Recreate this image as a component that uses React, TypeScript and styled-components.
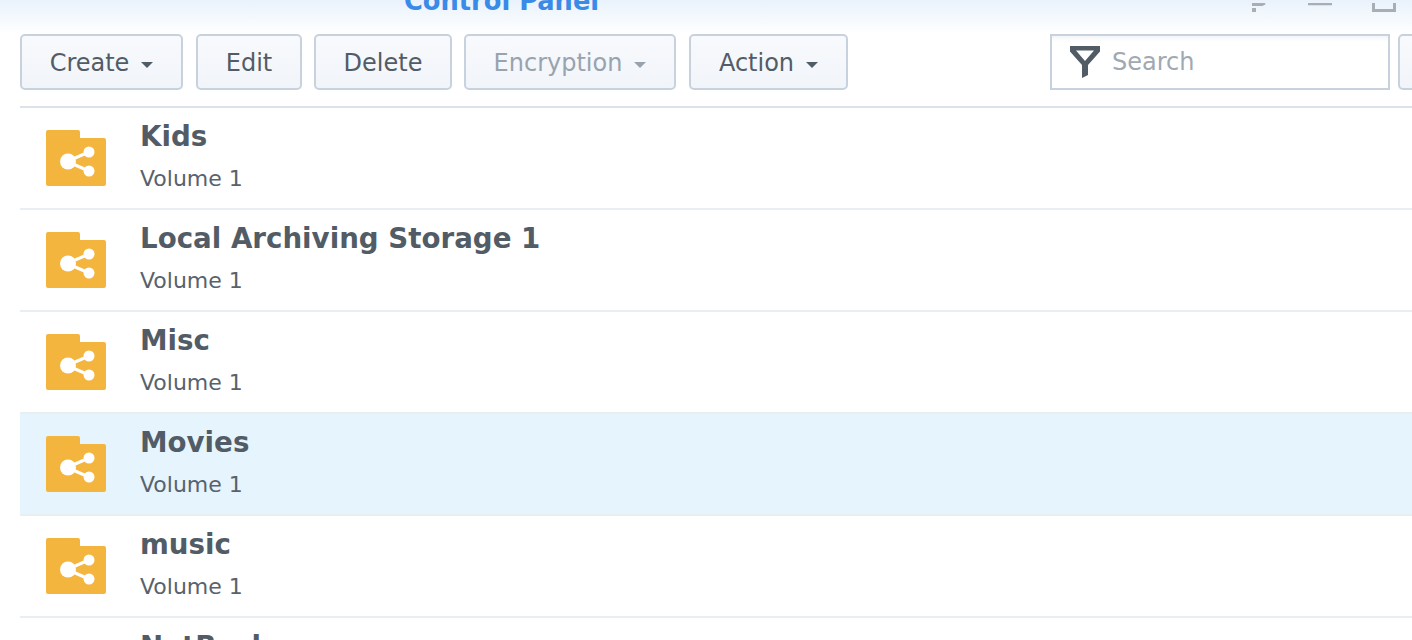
import React from "react";
import styled, { createGlobalStyle } from "styled-components";

const Global = createGlobalStyle`
  html, body { margin: 0; padding: 0; background: #fff; }
  body { font-family: "DejaVu Sans", Verdana, sans-serif; overflow: hidden; }
`;

const Page = styled.div`
  width: 1412px;
  height: 640px;
  overflow: hidden;
  background: #fff;
`;

const Header = styled.div`
  height: 34px;
  overflow: hidden;
  display: flex;
  align-items: flex-end;
  background: linear-gradient(180deg, #e9f2fb 0%, #ffffff 100%);
  position: relative;
`;

const Title = styled.div`
  margin-left: 404px;
  margin-bottom: 18px;
  font-size: 25.7px;
  line-height: 30px;
  font-weight: 700;
  color: #3a8ae8;
  white-space: nowrap;
`;

const WindowControls = styled.div`
  position: absolute;
  top: 0;
  right: 0;
  height: 12px;
`;

const Toolbar = styled.div`
  display: flex;
  align-items: flex-start;
  height: 72px;
  padding-left: 20px;
  box-sizing: border-box;
`;

const Button = styled.div<{ $w: number; $gap: number; $disabled?: boolean }>`
  width: ${(p) => p.$w}px;
  height: 56px;
  margin-right: ${(p) => p.$gap}px;
  box-sizing: border-box;
  border: 2px solid #c8d2de;
  border-radius: 5px;
  padding-top: 2px;
  background: linear-gradient(180deg, #f8fafd 0%, #f1f4f9 100%);
  color: ${(p) => (p.$disabled ? "#98a3ae" : "#525c66")};
  font-size: 24px;
  display: flex;
  align-items: center;
  justify-content: center;
  gap: 12px;
  flex-shrink: 0;
`;

const Caret = styled.span<{ $disabled?: boolean }>`
  width: 0;
  height: 0;
  margin-top: 3px;
  border-left: 6px solid transparent;
  border-right: 6px solid transparent;
  border-top: 6px solid ${(p) => (p.$disabled ? "#98a3ae" : "#525c66")};
`;

const Search = styled.div`
  width: 340px;
  height: 56px;
  margin-left: 202px;
  box-sizing: border-box;
  border: 2px solid #c8d2de;
  background: linear-gradient(180deg, #f3f5f8 0, #ffffff 6px);
  display: flex;
  align-items: center;
  padding-left: 18px;
  gap: 12px;
  color: #a0a9b2;
  font-size: 24px;
  flex-shrink: 0;
  line-height: 1;
`;

const SideButton = styled.div`
  width: 60px;
  height: 56px;
  margin-left: 8px;
  box-sizing: border-box;
  border: 2px solid #c8d2de;
  border-radius: 5px;
  background: linear-gradient(180deg, #f8fafd 0%, #f1f4f9 100%);
  flex-shrink: 0;
`;

const List = styled.div`
  margin-left: 20px;
  border-top: 2px solid #dbe2ea;
`;

const Row = styled.div<{ $selected?: boolean }>`
  height: 102px;
  box-sizing: border-box;
  border-bottom: 2px solid #e9eef2;
  background: ${(p) => (p.$selected ? "#e6f4fe" : "#fff")};
  display: flex;
  align-items: flex-start;
  padding-left: 26px;
`;

const FolderSvg = styled.svg`
  width: 60px;
  height: 56px;
  margin-top: 22px;
  flex-shrink: 0;
`;

const Texts = styled.div`
  margin-left: 35px;
`;

const Name = styled.div`
  font-size: 27.7px;
  line-height: 32px;
  margin-top: 13px;
  margin-left: -1px;
  font-weight: 700;
  color: #525c66;
  white-space: nowrap;
`;

const Sub = styled.div`
  font-size: 22px;
  line-height: 26px;
  margin-top: 13px;
  margin-left: -1px;
  color: #58626c;
  white-space: nowrap;
`;

const Folder = () => (
  <FolderSvg viewBox="0 0 60 56">
    <path
      d="M2 0h30a2 2 0 0 1 2 2v6h24a2 2 0 0 1 2 2v44a2 2 0 0 1-2 2H2a2 2 0 0 1-2-2V2a2 2 0 0 1 2-2z"
      fill="#f4b53f"
    />
    <path d="M21 31.5 L43 22 M21 31.5 L43 41" stroke="#fff" strokeWidth="3" />
    <circle cx="22" cy="31.5" r="8" fill="#fff" />
    <circle cx="43" cy="22" r="5.5" fill="#fff" />
    <circle cx="43" cy="41" r="5.5" fill="#fff" />
  </FolderSvg>
);

const Funnel = () => (
  <svg width="30" height="32" viewBox="0 0 30 32" style={{ flexShrink: 0 }}>
    <path
      fillRule="evenodd"
      d="M0 0h30v5.5L18 19v10l-6 3V19L0 5.5zM6 4.5L15 15L24 4.5z"
      fill="#525c66"
    />
  </svg>
);

const items: { name: string; selected?: boolean }[] = [
  { name: "Kids" },
  { name: "Local Archiving Storage 1" },
  { name: "Misc" },
  { name: "Movies", selected: true },
  { name: "music" },
  { name: "NetBackup" },
];

export default function App() {
  return (
    <Page>
      <Global />
      <Header>
        <Title>Control Panel</Title>
        <WindowControls>
          <svg width="172" height="12" viewBox="0 0 172 12">
            <path d="M12 1.5h10l3-1.5" stroke="#a8aeb4" strokeWidth="3" fill="none" />
            <path d="M12 7h4" stroke="#a8aeb4" strokeWidth="4" fill="none" />
            <path d="M68 1h24" stroke="#a8aeb4" strokeWidth="2.5" />
            <path d="M133.5 0v7.5h21V0" stroke="#a8aeb4" strokeWidth="3" fill="none" />
          </svg>
        </WindowControls>
      </Header>
      <Toolbar>
        <Button $w={163} $gap={13}>Create<Caret /></Button>
        <Button $w={106} $gap={12}>Edit</Button>
        <Button $w={138} $gap={12}>Delete</Button>
        <Button $w={212} $gap={13} $disabled>Encryption<Caret $disabled /></Button>
        <Button $w={159} $gap={0}>Action<Caret /></Button>
        <Search><Funnel />Search</Search>
        <SideButton />
      </Toolbar>
      <List>
        {items.map((it) => (
          <Row key={it.name} $selected={it.selected}>
            <Folder />
            <Texts>
              <Name>{it.name}</Name>
              <Sub>Volume 1</Sub>
            </Texts>
          </Row>
        ))}
      </List>
    </Page>
  );
}
